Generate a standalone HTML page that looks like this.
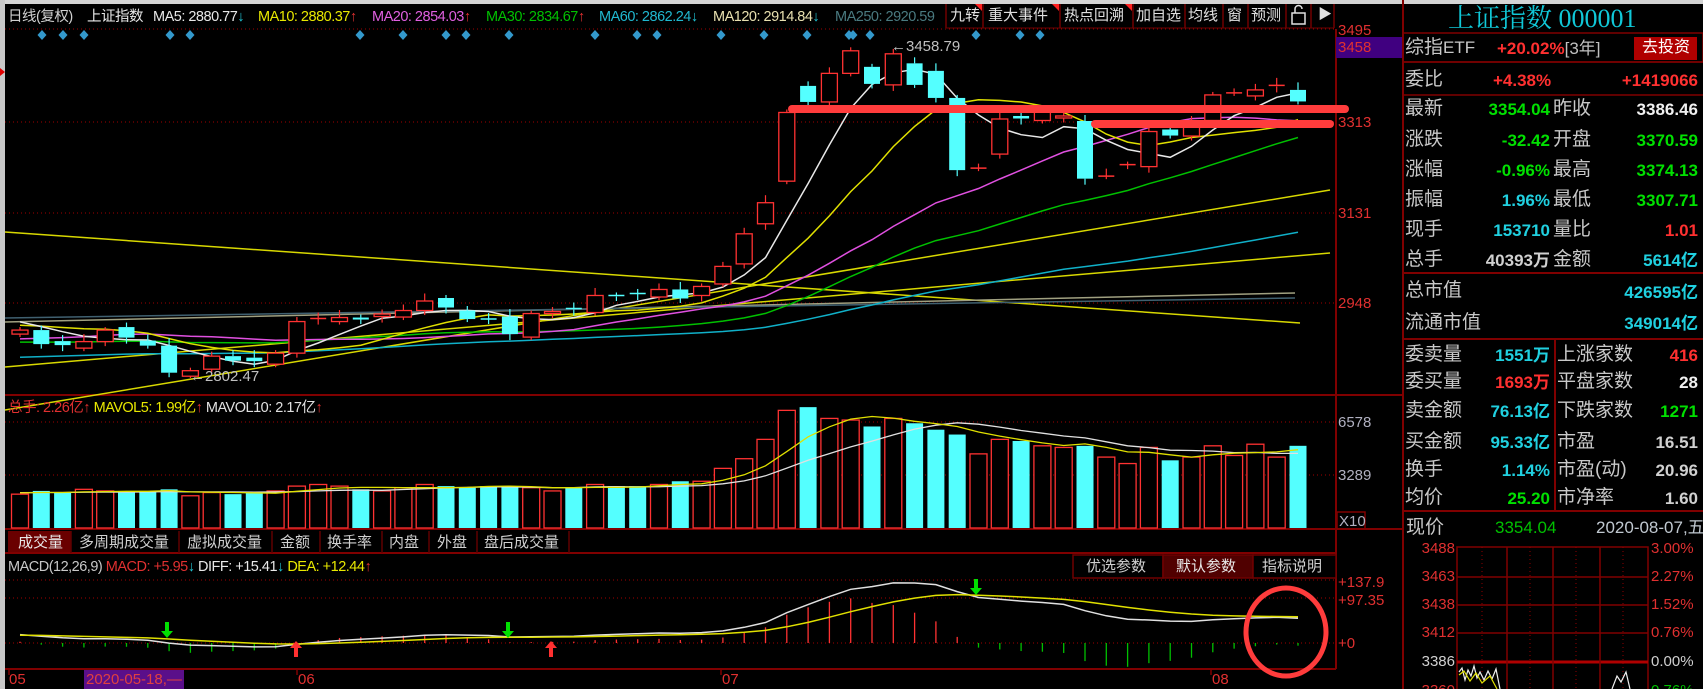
<!DOCTYPE html>
<html><head><meta charset="utf-8">
<style>
html,body{margin:0;padding:0;background:#000;width:1703px;height:689px;overflow:hidden}
body{position:relative;font-family:"Liberation Sans","Noto Sans CJK SC",sans-serif}
.t{position:absolute;white-space:nowrap;line-height:1}
.h{font-size:14.5px;top:10px;letter-spacing:-0.5px}
.p{font-size:19px;color:#c8c8c8}
.v{font-size:17px;font-weight:bold;text-align:right}
.ax{font-size:15px;color:#e03030}
svg{position:absolute;left:0;top:0}
</style></head><body>
<svg id="s" width="1703" height="689" xmlns="http://www.w3.org/2000/svg"></svg>

<!-- header -->
<div class="t h" style="left:8px;color:#d0d0d0">日线(复权)</div>
<div class="t h" style="left:87px;color:#e8e8e8">上证指数</div>
<div class="t h" style="left:153px;color:#e8e8e8">MA5: 2880.77<span style="color:#20c0d0">↓</span></div>
<div class="t h" style="left:258px;color:#e8e800">MA10: 2880.37<span style="color:#e03030">↑</span></div>
<div class="t h" style="left:372px;color:#e060e0">MA20: 2854.03<span style="color:#e03030">↑</span></div>
<div class="t h" style="left:486px;color:#00c000">MA30: 2834.67<span style="color:#e03030">↑</span></div>
<div class="t h" style="left:599px;color:#20b8d0">MA60: 2862.24<span style="color:#20c0d0">↓</span></div>
<div class="t h" style="left:713px;color:#e8e0b0">MA120: 2914.84<span style="color:#20c0d0">↓</span></div>
<div class="t h" style="left:835px;color:#4a7a80">MA250: 2920.59</div>
<div class="t" style="left:950px;top:8px;font-size:15px;color:#e0e0e0">九转</div>
<div class="t" style="left:988px;top:8px;font-size:15px;color:#e0e0e0">重大事件</div>
<div class="t" style="left:1064px;top:8px;font-size:15px;color:#e0e0e0">热点回溯</div>
<div class="t" style="left:1136px;top:8px;font-size:15px;color:#e0e0e0">加自选</div>
<div class="t" style="left:1188px;top:8px;font-size:15px;color:#e0e0e0">均线</div>
<div class="t" style="left:1227px;top:8px;font-size:15px;color:#e0e0e0">窗</div>
<div class="t" style="left:1251px;top:8px;font-size:15px;color:#e0e0e0">预测</div>
<div class="t" style="left:1318px;top:7px;font-size:14px;color:#e0e0e0">▶</div>

<div class="t" style="left:891px;top:39px;font-size:15px;color:#c0c0c0">←3458.79</div>
<div class="t" style="left:190px;top:369px;font-size:15px;color:#c0c0c0">←2802.47</div>

<!-- price axis -->
<div class="t ax" style="left:1338px;top:23px">3495</div>
<div class="t ax" style="left:1338px;top:40px">3458</div>
<div class="t ax" style="left:1338px;top:115px">3313</div>
<div class="t ax" style="left:1338px;top:206px">3131</div>
<div class="t ax" style="left:1338px;top:296px">2948</div>
<div class="t ax" style="left:1338px;top:415px;color:#b0b0c0">6578</div>
<div class="t ax" style="left:1338px;top:468px;color:#b0b0c0">3289</div>
<div class="t ax" style="left:1339px;top:514px;color:#b0b0c0">X10</div>
<div class="t ax" style="left:1338px;top:575px">+137.9</div>
<div class="t ax" style="left:1338px;top:593px">+97.35</div>
<div class="t ax" style="left:1338px;top:636px">+0</div>

<!-- volume label -->
<div class="t" style="left:8px;top:401px;font-size:14.5px;letter-spacing:-0.5px"><span style="color:#e03030">总手: 2.26亿↑</span> <span style="color:#e8e800">MAVOL5: 1.99亿</span><span style="color:#e03030">↑</span> <span style="color:#e0e0e0">MAVOL10: 2.17亿</span><span style="color:#e03030">↑</span></div>

<!-- tabs -->
<div class="t" style="left:18px;top:535px;font-size:15px;color:#e8e8e8">成交量</div>
<div class="t" style="left:79px;top:535px;font-size:15px;color:#d0d0d0">多周期成交量</div>
<div class="t" style="left:187px;top:535px;font-size:15px;color:#d0d0d0">虚拟成交量</div>
<div class="t" style="left:280px;top:535px;font-size:15px;color:#d0d0d0">金额</div>
<div class="t" style="left:327px;top:535px;font-size:15px;color:#d0d0d0">换手率</div>
<div class="t" style="left:389px;top:535px;font-size:15px;color:#d0d0d0">内盘</div>
<div class="t" style="left:437px;top:535px;font-size:15px;color:#d0d0d0">外盘</div>
<div class="t" style="left:484px;top:535px;font-size:15px;color:#d0d0d0">盘后成交量</div>

<!-- macd label -->
<div class="t" style="left:8px;top:560px;font-size:14.5px;letter-spacing:-0.5px"><span style="color:#c8c8c8">MACD(12,26,9)</span> <span style="color:#e03030">MACD: +5.95</span><span style="color:#20c0d0">↓</span> <span style="color:#e8e8e8">DIFF: +15.41</span><span style="color:#20c0d0">↓</span> <span style="color:#e8e800">DEA: +12.44</span><span style="color:#e03030">↑</span></div>
<div class="t" style="left:1086px;top:559px;font-size:15px;color:#d0d0d0">优选参数</div>
<div class="t" style="left:1176px;top:559px;font-size:15px;color:#e8e8e8">默认参数</div>
<div class="t" style="left:1262px;top:559px;font-size:15px;color:#d0d0d0">指标说明</div>

<!-- date axis -->
<div class="t ax" style="left:9px;top:672px">05</div>
<div class="t" style="left:84px;top:670px;width:100px;height:19px;background:#5a0f8a"></div>
<div class="t ax" style="left:86px;top:672px;color:#e04040">2020-05-18,—</div>
<div class="t ax" style="left:298px;top:672px">06</div>
<div class="t ax" style="left:722px;top:672px">07</div>
<div class="t ax" style="left:1212px;top:672px">08</div>

<!-- right panel -->
<div class="t" style="left:1448px;top:6px;font-size:26px;color:#10c8d8;font-family:'Liberation Serif','Noto Serif CJK SC',serif">上证指数 000001</div>
<div class="t p" style="left:1405px;top:38px">综指<span style="font-size:17px">ETF</span></div>
<div class="t" style="left:1497px;top:40px;font-size:17px;color:#ff3030;font-weight:bold">+20.02%<span style="color:#c0c0c0;font-weight:normal">[3年]</span></div>
<div class="t" style="left:1634px;top:37px;width:63px;height:23px;background:#b00000"></div>
<div class="t" style="left:1642px;top:40px;font-size:16px;color:#fff">去投资</div>
<div class="t p" style="left:1405px;top:70px">委比</div>
<div class="t" style="left:1493px;top:72px;font-size:17px;font-weight:bold;color:#ff3030">+4.38%</div>

<div id="rows"></div>

<div class="t p" style="left:1405px;top:281px">总市值</div>
<div class="t p" style="left:1405px;top:313px">流通市值</div>
<div class="t p" style="left:1405px;top:345px">委卖量</div>
<div class="t p" style="left:1405px;top:372px">委买量</div>
<div class="t p" style="left:1405px;top:401px">卖金额</div>
<div class="t p" style="left:1405px;top:432px">买金额</div>
<div class="t p" style="left:1405px;top:460px">换手</div>
<div class="t p" style="left:1405px;top:488px">均价</div>
<div class="t p" style="left:1557px;top:345px">上涨家数</div>
<div class="t p" style="left:1557px;top:372px">平盘家数</div>
<div class="t p" style="left:1557px;top:401px">下跌家数</div>
<div class="t p" style="left:1557px;top:432px">市盈</div>
<div class="t p" style="left:1557px;top:460px">市盈(动)</div>
<div class="t p" style="left:1557px;top:488px">市净率</div>
<div class="t p" style="left:1406px;top:518px">现价</div>
<div class="t" style="left:1495px;top:519px;font-size:17px;color:#00c000">3354.04</div>
<div class="t" style="left:1596px;top:519px;font-size:17px;color:#c0c8d0;width:102px;text-align:right">2020-08-07,五</div>

<div id="mini"></div>

<script>
const S=document.getElementById('s');
let out='';
function L(x1,y1,x2,y2,c,w,da){out+=`<line x1="${x1}" y1="${y1}" x2="${x2}" y2="${y2}" stroke="${c}" stroke-width="${w||1}"${da?` stroke-dasharray="${da}"`:''}/>`}
function R(x,y,w,h,f,st,sw){out+=`<rect x="${x}" y="${y}" width="${w}" height="${h}" fill="${f||'none'}"${st?` stroke="${st}" stroke-width="${sw||1}"`:''}/>`}
function P(pts,c,w){out+=`<polyline points="${pts.map(p=>p[0].toFixed(1)+','+p[1].toFixed(1)).join(' ')}" fill="none" stroke="${c}" stroke-width="${w||1.3}"/>`}
const DR='#800000';
R(0,0,1703,4,'#d4d4d4');R(0,0,5,689,'#c8c8c8');
out+=`<polygon points="0,68 5,72 0,76" fill="#e00000"/>`;
const bx=[946,983,1060,1133,1185,1223,1248,1286,1311,1334];
R(946,4,388,25,'#000');
for(let i=0;i<bx.length;i++)L(bx[i],4,bx[i],28,'#700000',1.5);
L(946,28,1334,28,'#700000',1);
[983,1060,1133].forEach(x=>out+=`<polygon points="${x-8},4 ${x-1},4 ${x-1},11" fill="#ff2020"/>`);
out+=`<rect x="1292" y="13" width="13" height="11" fill="none" stroke="#e0e0e0" stroke-width="1.5"/><path d="M1295 13 V9 a3.5 3.5 0 0 1 7 0" fill="none" stroke="#e0e0e0" stroke-width="1.5"/>`;
L(5,29,1336,29,'#a00000',1,'1,3');
L(1336,29,1336,669,DR,2);L(1403,0,1403,689,DR,2);
L(5,395,1403,395,DR,2);L(5,529,1403,529,DR,2);L(5,553,1336,553,DR,2);L(5,669,1336,669,DR,2);
R(1336,37,66,21,'#400080');
[122,213,303,422,475,580,598,643].forEach(y=>L(5,y,1336,y,'#a00000',1,'1,3'));
R(8,531,63,21,'#6a0000');
[71,179,272,320,382,429,477,569].forEach(x=>L(x,531,x,553,'#600000',1.5));
R(1073,555,90,23,'#000','#700000',1.5);R(1163,555,90,23,'#500000','#700000',1.5);R(1253,555,83,23,'#000','#700000',1.5);
[9,297,721,1211].forEach(x=>L(x,669,x,675,DR,1.5));
R(1337,512,28,17,'none',DR,1.5);
R(1403,33,300,29,'none',DR,1.5);L(1403,62,1703,62,DR,1.5);L(1403,95,1703,95,DR,1.5);
L(1403,273,1703,273,DR,2);L(1403,339,1703,339,DR,2);L(1555,339,1555,511,DR,2);L(1403,511,1703,511,DR,2);
[42,63,84,170,190,360,403,446,466,509,595,637,657,721,764,807,849,853,870,976,1020,1040].forEach(x=>out+=`<polygon points="${x},30 ${x+4.5},35 ${x},40 ${x-4.5},35" fill="#3399cc"/>`);

const C=[2898,2870,2868,2875,2898,2883,2867,2813,2817,2846,2837,2836,2852,
2915,2921,2923,2919,2930,2937,2956,2943,2920,2919,2890,2931,2935,2939,2967,2965,2970,2979,2961,2985,
3025,3090,3152,3332,3353,3410,3455,3389,3449,3387,3361,3217,3221,3319,3320,3333,3325,3200,3205,3228,3294,3286,3310,
3367,3371,3377,3386,3354];
const n=C.length;
const O=C.map((c,i)=>i?C[i-1]+((i%3)-1)*6:2890);
const ov={33:2990,34:3030,35:3110,36:3195,37:3385,38:3353,39:3410,40:3423,41:3387,42:3430,43:3415,44:3361,45:3221,46:3249,47:3325,48:3316,49:3321,50:3315,51:3205,52:3228,53:3224,54:3298,55:3285,56:3316,57:3371,58:3365,59:3384,60:3377,7:2867,8:2806,9:2820};
for(const k in ov)O[k]=ov[k];
const H=C.map((c,i)=>Math.max(c,O[i])+6+(i%4)*3), Lw=C.map((c,i)=>Math.min(c,O[i])-6-(i%3)*3);
H[41]=3458.79;H[39]=3462;Lw[8]=2802.47;H[60]=3392;
const X=i=>20+i*21.3;
const Y=p=>122-(p-3313)*0.5014;
L(5,232,1300,323,'#d8d800',1.5);L(5,410,1330,190,'#d8d800',1.5);L(5,367,1330,253,'#d8d800',1.5);
L(5,322,1295,293,'#a0a080',1.5);L(5,318,1295,298,'#406070',1.5);
const pre=[];for(let j=0;j<60;j++)pre.push(2780+j*2+Math.sin(j/4)*25);
const all=pre.concat(C);
function ma(k){const r=[];for(let i=0;i<n;i++){let s=0;for(let j=0;j<k;j++)s+=all[60+i-j];r.push([X(i),Y(s/k)]);}return r;}
P(ma(60),'#10b0c8',1.5);P(ma(30),'#00c000',1.5);P(ma(20),'#e050e0',1.5);P(ma(10),'#e0e000',1.5);P(ma(5),'#e8e8e8',1.5);
for(let i=0;i<n;i++){const x=X(i),up=C[i]>=O[i],col=up?'#ff3232':'#54ffff';
 const t=Y(Math.max(C[i],O[i])),b=Y(Math.min(C[i],O[i]));
 L(x,Y(H[i]),x,t,col,1.2);L(x,b,x,Y(Lw[i]),col,1.2);
 if(b-t<1.5)L(x-8,t,x+8,t,col,1.5);
 else if(up)R(x-8,t,16,b-t,'#000',col,1.3);else R(x-8,t,16,b-t,col);}
const V=[2100,2300,2200,2400,2300,2200,2300,2400,2000,2200,2100,2200,2300,
2600,2700,2600,2400,2300,2500,2700,2600,2500,2600,2600,2500,2300,2500,2700,2600,2600,2700,2900,2900,
3700,4300,5500,7300,7500,6800,6700,6300,6800,6500,6100,5800,4600,5500,5400,5100,5000,5100,4400,4000,5000,4200,4400,
5100,4500,5200,4400,5100];
const VY=v=>528-v*53/3289;
for(let i=0;i<n;i++){const x=X(i),up=C[i]>=O[i];const t=VY(V[i]);
 if(up)R(x-8.5,t,17,528-t,'#000','#ff3232',1.3);else R(x-8.5,t,17,528-t,'#54ffff');}
const vpre=[];for(let j=0;j<10;j++)vpre.push(2200);const va=vpre.concat(V);
function mv(k){const r=[];for(let i=0;i<n;i++){let s=0;for(let j=0;j<k;j++)s+=va[10+i-j];r.push([X(i),VY(s/k)]);}return r;}
P(mv(10),'#e0e0e0',1.3);P(mv(5),'#e0e000',1.3);
let e12=all[0],e26=all[0],dea=0;const D=[],E=[],M=[];
for(let i=0;i<all.length;i++){e12=e12*11/13+all[i]*2/13;e26=e26*25/27+all[i]*2/27;const d=e12-e26;dea=dea*0.8+d*0.2;
 if(i>=60){D.push(d);E.push(dea);M.push(2*(d-dea));}}
const MY=v=>643-v*0.4426;
for(let i=0;i<n;i++){const x=X(i);L(x,643,x,MY(M[i]),M[i]>=0?'#ff3232':'#00c000',1.3);}
P(D.map((d,i)=>[X(i),MY(d)]),'#e0e0e0',1.5);P(E.map((d,i)=>[X(i),MY(d)]),'#e0e000',1.5);
function arrow(x,y,down,c){if(down)out+=`<path d="M${x-2} ${y} h4 v9 h4 l-6 7 l-6 -7 h4z" fill="${c}"/>`;else out+=`<path d="M${x-2} ${y+16} h4 v-9 h4 l-6 -7 l-6 7 h4z" fill="${c}"/>`;}
arrow(167,622,1,'#00e000');arrow(508,622,1,'#00e000');arrow(976,579,1,'#00e000');
arrow(296,641,0,'#ff3030');arrow(551,641,0,'#ff3030');
out+=`<line x1="792" y1="109" x2="1345" y2="109" stroke="#ff3c3c" stroke-width="8" stroke-linecap="round"/>`;
out+=`<line x1="1095" y1="124" x2="1330" y2="124" stroke="#ff3c3c" stroke-width="8" stroke-linecap="round"/>`;
out+=`<ellipse cx="1286" cy="632" rx="40" ry="44" fill="none" stroke="#ff3c3c" stroke-width="5"/>`;
R(1457,547,191,150,'none',DR,1.5);
[577,605,633].forEach(y=>L(1457,y,1648,y,DR,1.5));L(1457,662,1648,662,'#b00000',3);
[1507,1553,1600].forEach(x=>L(x,547,x,689,DR,1.5));
[1482,1530,1576,1623].forEach(x=>L(x,547,x,689,'#900000',1,'1,3'));
out+=`<polyline points="1459,672 1462,668 1465,680 1468,670 1471,676 1474,666 1477,678 1480,672 1484,680 1488,671 1492,679 1496,669 1500,689" fill="none" stroke="#f0f0f0" stroke-width="1.2"/>`;
out+=`<polyline points="1459,675 1464,671 1470,681 1476,673 1482,683 1490,676 1497,689" fill="none" stroke="#e0e000" stroke-width="1.2"/>`;
out+=`<polyline points="1612,689 1617,676 1621,682 1626,672 1630,689" fill="none" stroke="#f0f0f0" stroke-width="1.2"/>`;
S.innerHTML=out;

const rows=[
[109,'最新','3354.04','#00e000','昨收','3386.46','#f0f0f0'],
[140,'涨跌','-32.42','#00e000','开盘','3370.59','#00e000'],
[170,'涨幅','-0.96%','#00e000','最高','3374.13','#00e000'],
[200,'振幅','1.96%','#20d0e0','最低','3307.71','#00e000'],
[230,'现手','153710','#20d0e0','量比','1.01','#ff3030'],
[260,'总手','40393万','#d0d0d0','金额','5614亿','#20d0e0'],
];
let h='';
rows.forEach(r=>{const t=r[0]-10;
h+=`<div class="t p" style="left:1405px;top:${t}px">${r[1]}</div>`;
h+=`<div class="t v" style="left:1450px;width:100px;top:${t+2}px;color:${r[3]}">${r[2]}</div>`;
h+=`<div class="t p" style="left:1553px;top:${t}px">${r[4]}</div>`;
h+=`<div class="t v" style="left:1598px;width:100px;top:${t+2}px;color:${r[6]}">${r[5]}</div>`;});
const rv=[[80,'+1419066','#ff3030',1598],[292,'426595亿','#20d0e0',1598],[323,'349014亿','#20d0e0',1598],
[355,'1551万','#20d0e0',1450],[382,'1693万','#ff3030',1450],[411,'76.13亿','#20d0e0',1450],[442,'95.33亿','#20d0e0',1450],[470,'1.14%','#20d0e0',1450],[498,'25.20','#00e000',1450],
[355,'416','#ff3030',1598],[382,'28','#f0f0f0',1598],[411,'1271','#00e000',1598],[442,'16.51','#d0d0d0',1598],[470,'20.96','#d0d0d0',1598],[498,'1.60','#d0d0d0',1598]];
rv.forEach(r=>h+=`<div class="t v" style="left:${r[3]}px;width:100px;top:${r[0]-8}px;color:${r[2]}">${r[1]}</div>`);
document.getElementById('rows').innerHTML=h;
let m='';
[[549,'3488','3.00%','#e03030'],[577,'3463','2.27%','#e03030'],[605,'3438','1.52%','#e03030'],[633,'3412','0.76%','#e03030'],[662,'3386','0.00%','#d0d0d0'],[691,'3360','0.76%','#00c000']].forEach(r=>{
m+=`<div class="t" style="left:1405px;width:50px;text-align:right;top:${r[0]-8}px;font-size:15px;color:${r[0]==691?'#e03030':r[3]}">${r[1]}</div>`;
m+=`<div class="t" style="left:1651px;top:${r[0]-8}px;font-size:15px;color:${r[3]}">${r[2]}</div>`;});
document.getElementById('mini').innerHTML=m;
</script>
</body></html>
